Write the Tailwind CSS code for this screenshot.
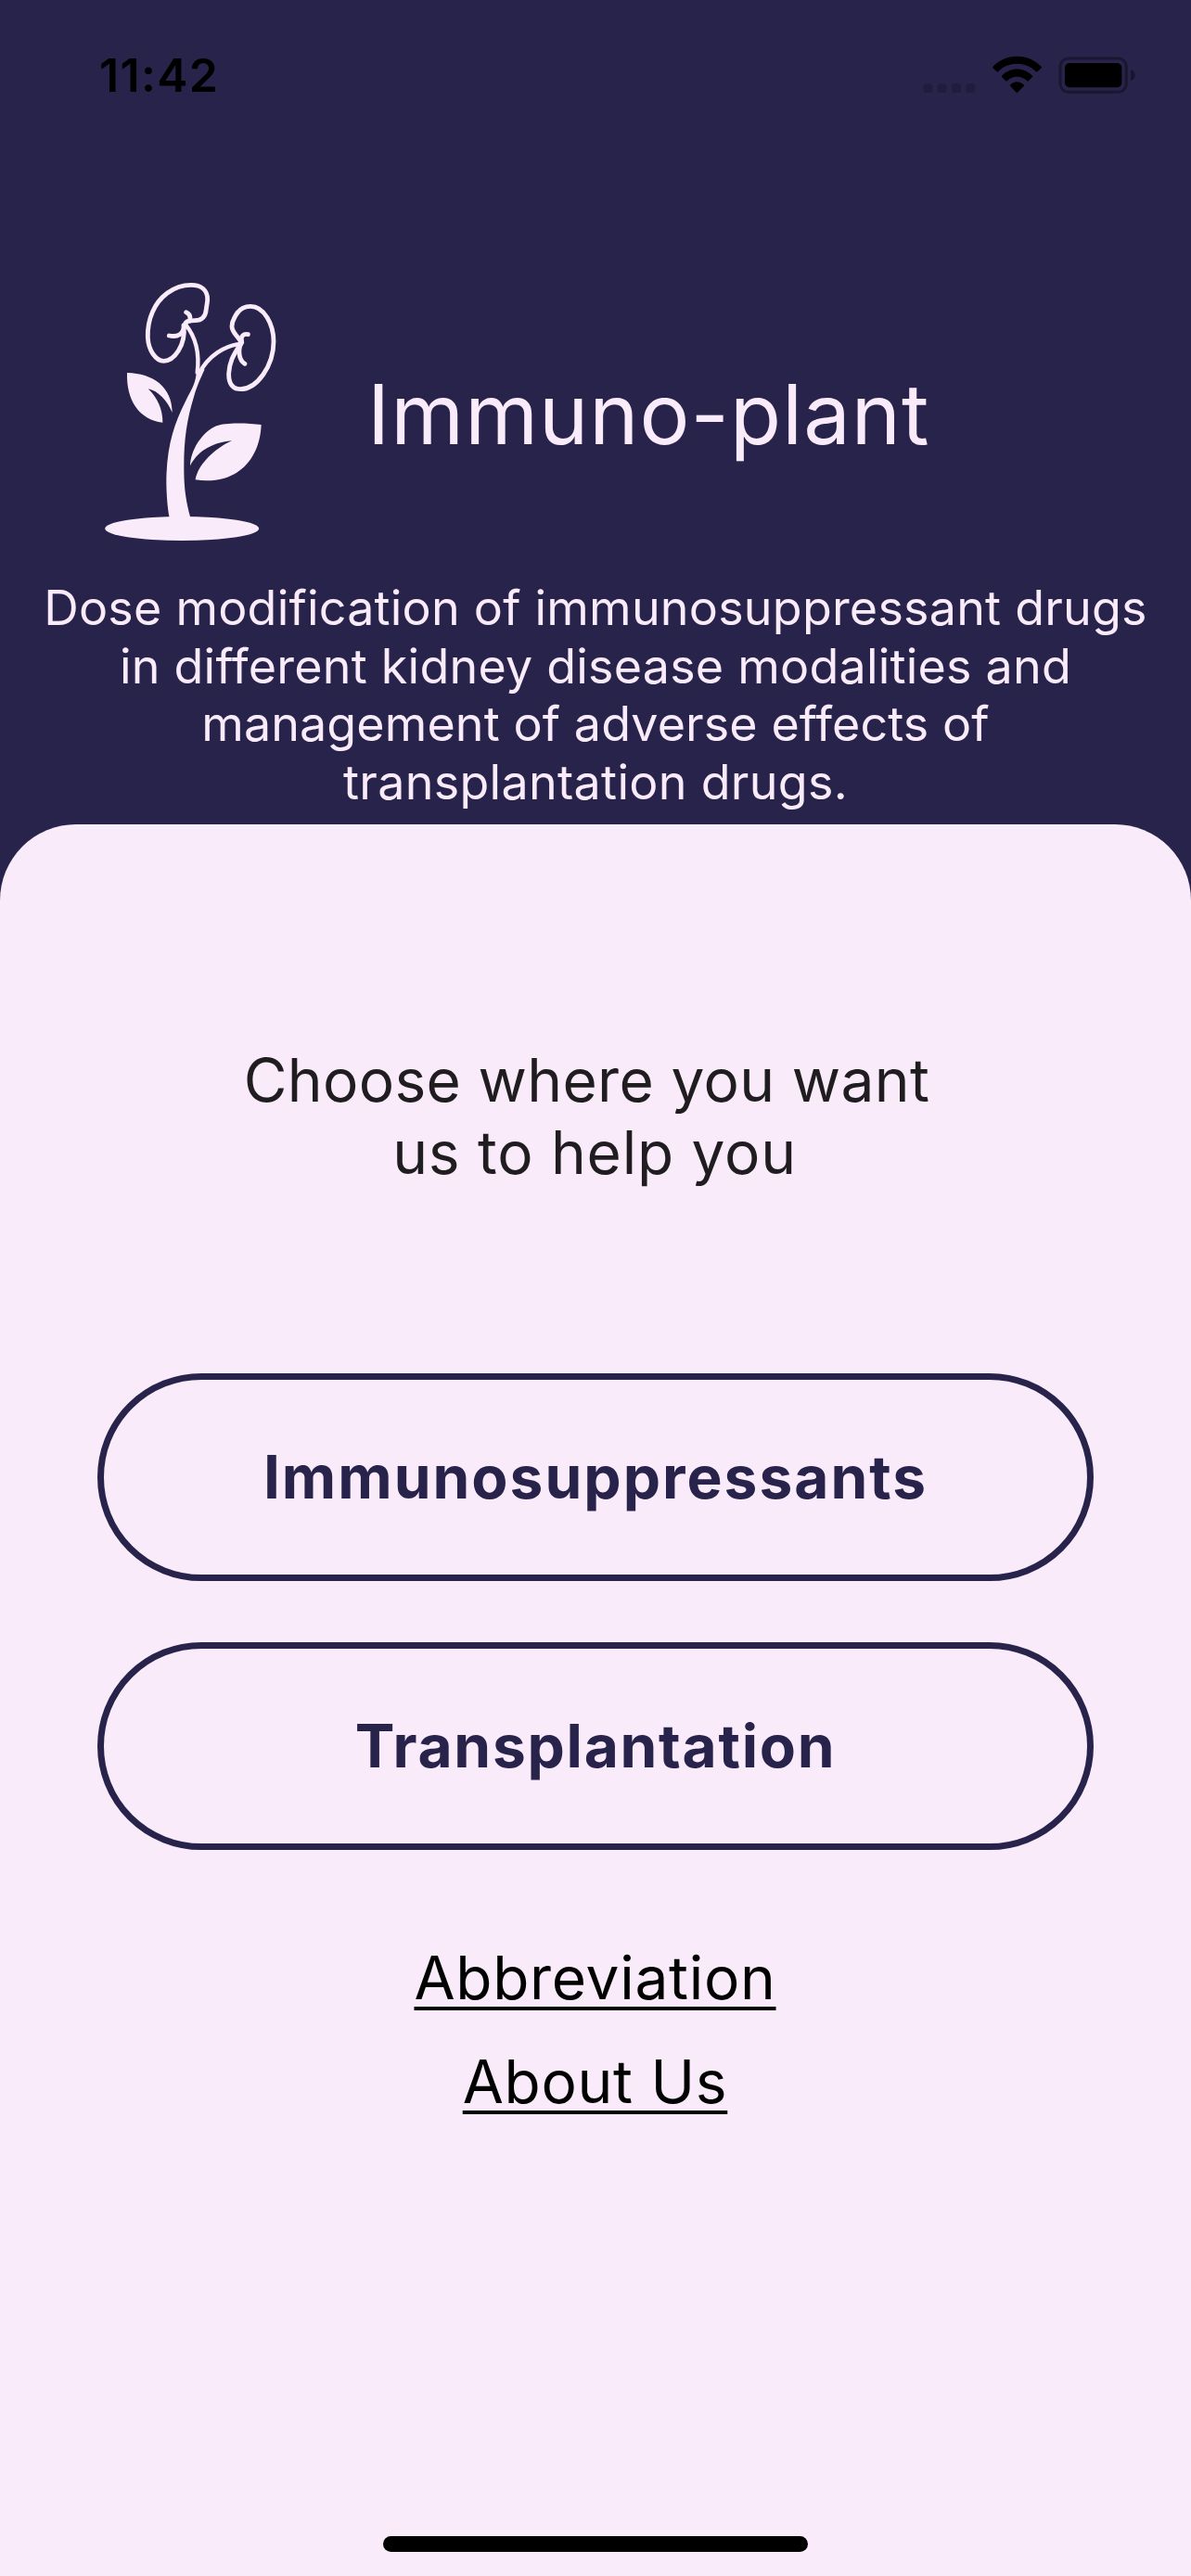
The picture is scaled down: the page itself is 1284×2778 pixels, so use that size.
<!DOCTYPE html>
<html lang="en">
<head>
<meta charset="utf-8">
<title>Immuno-plant</title>
<script src="https://cdn.jsdelivr.net/npm/@tailwindcss/browser@4"></script>
</head>
<body class="bg-[#28234b] font-['Inter',sans-serif]">
<div class="flex h-[2778px] w-[1284px] flex-col overflow-hidden">

  <!-- Status bar -->
  <div class="flex h-[290px] shrink-0 items-start justify-between pt-10 pr-6 pl-[107px] text-black">
    <span class="mt-[11px] text-[50px] leading-[60px] font-semibold tracking-[1.3px]">11:42</span>
    <svg class="h-[90px] w-[300px]" viewBox="0 0 900 270">
      <g fill="#000" fill-opacity=".18">
        <rect x="106" y="150" width="30" height="30" rx="9"/>
        <rect x="152" y="150" width="30" height="30" rx="9"/>
        <rect x="198" y="150" width="30" height="30" rx="9"/>
        <rect x="244" y="150" width="30" height="30" rx="9"/>
      </g>
      <path d="M330 97C374 51 445 51 489 97Q489 99 488 100L475 112Q473 113 471 112C436 78 382 78 348 112Q346 113 344 112L331 100Q330 99 330 97Z"/>
      <path d="M359 126C387 96 432 96 460 126Q460 128 459 129L446 142Q444 143 442 142C424 124 395 124 377 142Q375 143 373 142L360 129Q359 128 359 126Z"/>
      <path d="M387 155C399 141 420 141 432 155Q433 157 431 159L411 179Q409 181 407 179L388 159Q386 157 387 155Z"/>
      <rect x="549" y="69" width="214" height="109" rx="27" fill="none" stroke="#000" stroke-opacity=".35" stroke-width="9"/>
      <rect x="564" y="84" width="184" height="79" rx="15"/>
      <path d="M777 105C796 112 796 135 777 142Z" fill-opacity=".4"/>
    </svg>
  </div>

  <!-- Logo and title -->
  <header class="flex h-[335px] shrink-0 items-start pl-[100px]">
    <svg class="h-[300px] w-[220px]" viewBox="0 0 660 900" fill="#f9ebfa">
      <ellipse cx="288.500" cy="840" rx="249" ry="39"/>
      <path d="M336 325C334 370 322 385 300 428C262 502 240 575 238 680C238 730 242 775 248 805L316 805C302 755 295 710 295 650C294 560 303 490 328 410C338 378 345 362 362 325Z"/>
      <path d="M111 336C195 338 257 382 257 465C240 425 212 395 179 388C208 415 227 455 226 497C150 488 108 425 111 336Z"/>
      <path d="M545 504C500 498 430 496 400 508C350 530 316 590 315 637C335 598 375 563 450 556C390 582 337 640 332 682C465 700 540 620 545 504Z"/>
      <g fill="none" stroke="#f9ebfa" stroke-width="14.500" stroke-linecap="round" stroke-linejoin="round">
        <path d="M297 181C302 168 312 167 330 167C352 167 365 155 367 130C369 112 371 110 371 98C371 68 350 52 318 52C260 52 213 92 193 140C182 165 177 190 178 222C180 262 203 298 230 298C262 298 302 248 294 183"/>
        <path d="M302 140C314 145 317 155 314 168M247 216C277 222 292 210 296 185"/>
        <path stroke-width="13" d="M301 181C334 222 346 272 338 335"/>
        <path d="M480 238C474 222 450 207 450 186C450 168 455 165 463 149C474 130 488 121 510 121C555 121 585 180 585 235C585 315 530 389 478 389C450 389 439 367 440 338C442 300 456 278 469 257Q477 244 482 238"/>
        <path d="M502 212C488 209 477 217 482 236C468 262 472 295 492 307"/>
        <path stroke-width="13" d="M480 242C425 248 373 282 345 337"/>
      </g>
    </svg>
    <h1 class="mt-[102px] ml-[76px] text-[90px] leading-[110px] tracking-[1.07px] whitespace-nowrap text-[#f9ebfa]">Immuno-plant</h1>
  </header>

  <p class="flex h-[263.5px] shrink-0 flex-col items-center text-[52px] leading-[62.5px] tracking-[0.22px] whitespace-nowrap text-[#f9ebfa]">
    <span>Dose modification of immunosuppressant drugs</span>
    <span>in different kidney disease modalities and</span>
    <span class="tracking-[0.1px]">management of adverse effects of</span>
    <span class="tracking-[0.3px]">transplantation drugs.</span>
  </p>

  <!-- Sheet -->
  <main class="flex flex-1 flex-col items-center rounded-t-[82px] bg-[#f9ebfa] pt-[237px]">
    <h2 class="flex flex-col items-center text-[64px] leading-[78.5px] whitespace-nowrap text-[#201d20]">
      <span class="pr-[19px] tracking-[0.35px]">Choose where you want</span>
      <span class="pr-[2px] tracking-[0.75px]">us to help you</span>
    </h2>
    <button class="mt-[198.5px] h-[224px] w-[1074px] rounded-full border-[7px] border-[#28234b] text-[64px] font-bold tracking-[2px] text-[#28234b]">Immunosuppressants</button>
    <button class="mt-[65.5px] h-[224px] w-[1074px] rounded-full border-[7px] border-[#28234b] text-[64px] font-bold tracking-[1.73px] text-[#28234b]">Transplantation</button>
    <nav class="mt-[99px] flex flex-col items-center gap-[34px] pr-px text-[64px] leading-[78px] tracking-[0.7px] text-black">
      <a class="underline decoration-4 underline-offset-8">Abbreviation</a>
      <a class="underline decoration-4 underline-offset-8">About Us</a>
    </nav>
    <div class="mt-auto mb-[26px] h-[17px] w-[458px] rounded-full bg-black"></div>
  </main>
</div>
</body>
</html>
